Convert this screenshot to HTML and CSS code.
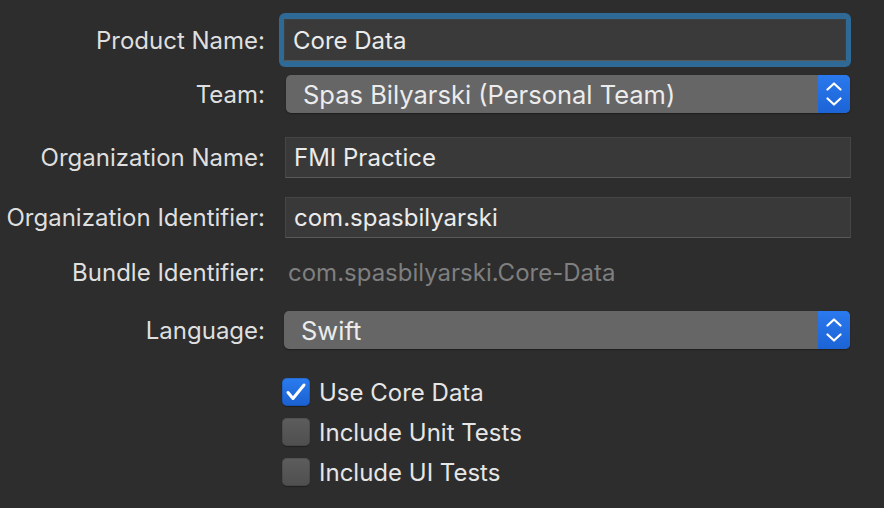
FILE: index.html
```html
<!DOCTYPE html>
<html>
<head>
<meta charset="utf-8">
<link rel="stylesheet" href="styles.css">
</head>
<body>
<div class="form">
  <div class="row r1">
    <div class="lbl">Product Name:</div>
    <div class="ctl"><div class="ring"><div class="field">Core Data</div></div></div>
  </div>
  <div class="row r2">
    <div class="lbl">Team:</div>
    <div class="ctl"><div class="popup team"><span class="ptext">Spas Bilyarski (Personal Team)</span><span class="stepper"><svg width="16" height="26" viewBox="0 0 16 26"><path d="M1.5 8.5 L8 2.5 L14.5 8.5" fill="none" stroke="#fff" stroke-width="2.2" stroke-linecap="round" stroke-linejoin="round"/><path d="M1.5 17.5 L8 23.5 L14.5 17.5" fill="none" stroke="#fff" stroke-width="2.2" stroke-linecap="round" stroke-linejoin="round"/></svg></span></div></div>
  </div>
  <div class="row r3">
    <div class="lbl">Organization Name:</div>
    <div class="ctl"><div class="field plain">FMI Practice</div></div>
  </div>
  <div class="row r4">
    <div class="lbl">Organization Identifier:</div>
    <div class="ctl"><div class="field plain">com.spasbilyarski</div></div>
  </div>
  <div class="row r5">
    <div class="lbl">Bundle Identifier:</div>
    <div class="ctl"><div class="static">com.spasbilyarski.Core-Data</div></div>
  </div>
  <div class="row r6">
    <div class="lbl">Language:</div>
    <div class="ctl"><div class="popup lang"><span class="ptext">Swift</span><span class="stepper"><svg width="16" height="26" viewBox="0 0 16 26"><path d="M1.5 8.5 L8 2.5 L14.5 8.5" fill="none" stroke="#fff" stroke-width="2.2" stroke-linecap="round" stroke-linejoin="round"/><path d="M1.5 17.5 L8 23.5 L14.5 17.5" fill="none" stroke="#fff" stroke-width="2.2" stroke-linecap="round" stroke-linejoin="round"/></svg></span></div></div>
  </div>
  <div class="row r7">
    <div class="lbl"></div>
    <div class="ctl"><div class="check"><span class="box on"><svg width="28" height="28" viewBox="0 0 28 28"><path d="M6 14.5 L11 20.5 L22 7" fill="none" stroke="#fff" stroke-width="3" stroke-linecap="round" stroke-linejoin="round"/></svg></span><span class="ctext">Use Core Data</span></div></div>
  </div>
  <div class="row r8">
    <div class="lbl"></div>
    <div class="ctl"><div class="check"><span class="box"></span><span class="ctext">Include Unit Tests</span></div></div>
  </div>
  <div class="row r9">
    <div class="lbl"></div>
    <div class="ctl"><div class="check"><span class="box"></span><span class="ctext">Include UI Tests</span></div></div>
  </div>
</div>
</body>
</html>
```
FILE: styles.css
```css
html, body {
  margin: 0;
  padding: 0;
  background: #2d2d2d;
}
body {
  font-family: Inter, "Noto Sans", "DejaVu Sans", sans-serif;
  font-size: 24px;
  color: #e2e2e2;
  width: 884px;
  height: 508px;
  overflow: hidden;
}
.form {
  display: flex;
  flex-direction: column;
  padding-top: 13px;
}
.row {
  display: flex;
  align-items: center;
}
.lbl {
  width: 265px;
  flex: none;
  text-align: right;
  color: #dfdfdf;
  white-space: nowrap;
}
.ctl {
  margin-left: 20px;
  width: 566px;
  display: flex;
  align-items: center;
}
.r1 { height: 54px; }
.r2 { height: 38px; margin-top: 8px; }
.r3 { height: 41px; margin-top: 24px; }
.r4 { height: 41px; margin-top: 19px; }
.r5 { height: 30px; margin-top: 19px; }
.r6 { height: 38px; margin-top: 24px; }
.r7 { height: 28px; margin-top: 29px; }
.r8 { height: 28px; margin-top: 12px; }
.r9 { height: 28px; margin-top: 12px; }

.ring {
  margin-left: -6px;
  width: 578px;
  height: 54px;
  box-sizing: border-box;
  padding: 6px 5px;
  background: #2f6a96;
  border-radius: 6px;
}
.field {
  box-sizing: border-box;
  height: 42px;
  width: 100%;
  background: #3a3a3a;
  border: 1px solid #3f3f3f;
  border-bottom-color: #585858;
  padding-left: 8px;
  display: flex;
  align-items: center;
  color: #ebebeb;
}
.field.plain {
  height: 41px;
  width: 566px;
  border-color: #454545;
  border-bottom-color: #5a5a5a;
  background: #393939;
}
.static {
  padding-left: 3px;
  color: #7f7f7f;
}
.popup {
  box-sizing: border-box;
  height: 38px;
  background: #666666;
  border-radius: 5px;
  display: flex;
  align-items: center;
  box-shadow: 0 1px 1.5px rgba(0,0,0,0.35);
  overflow: hidden;
  font-size: 25.5px;
}
.popup.team { width: 564px; margin-left: 1px; }
.popup.lang { width: 566px; margin-left: -1px; }
.ptext {
  flex: 1;
  padding-left: 17px;
  color: #ececec;
}
.stepper {
  width: 32px;
  height: 38px;
  background: linear-gradient(#2a79ee, #1c64d6);
  display: flex;
  align-items: center;
  justify-content: center;
}
.stepper svg { display: block; }
.check {
  display: flex;
  align-items: center;
  margin-left: -3px;
}
.box {
  width: 28px;
  height: 28px;
  box-sizing: border-box;
  border-radius: 5px;
  background: linear-gradient(#5d5d5d, #4f4f4f);
  box-shadow: inset 0 0 0 1px rgba(0,0,0,0.12), 0 1px 1px rgba(0,0,0,0.3);
  flex: none;
}
.box.on {
  background: linear-gradient(#2b7cf0, #1a60d0);
}
.box svg { display: block; }
.ctext {
  margin-left: 9px;
  color: #e6e6e6;
}
```
